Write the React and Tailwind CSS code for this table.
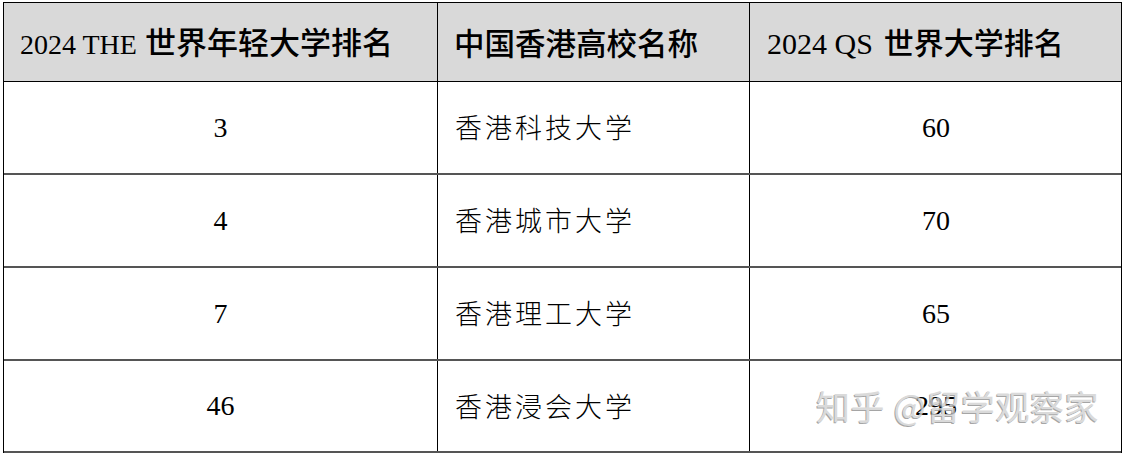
import React from "react";

const rows = [
  ["3", "香港科技大学", "60"],
  ["4", "香港城市大学", "70"],
  ["7", "香港理工大学", "65"],
  ["46", "香港浸会大学", "295"],
];

const serifCls = "font-['Liberation_Serif','Noto_Sans_CJK_SC',serif]";
const sansCls = "font-['Noto_Sans_CJK_SC',sans-serif]";

export default function App() {
  return (
    <div className="relative w-[1125px] h-[454px] bg-white overflow-hidden text-black">
      <div className="ml-[3px] mt-[2px] w-[1119px] border-t border-l border-r border-black">
        <div className="grid grid-cols-[434px_312px_372px] h-[79px] bg-[#d9d9d9] border-b border-black">
          <div className="flex items-center border-r border-black pl-[16px] whitespace-nowrap">
            <span className="flex items-baseline">
              <span className={`text-[28px] leading-none ${serifCls}`}>2024 THE</span>
              <span className={`text-[31px] leading-none font-medium ml-[8px] ${sansCls}`}>世界年轻大学排名</span>
            </span>
          </div>
          <div className="flex items-center border-r border-black pl-[16px]">
            <span className={`text-[30.5px] leading-none font-medium ${sansCls}`}>中国香港高校名称</span>
          </div>
          <div className="flex items-center pl-[17px] whitespace-nowrap">
            <span className="flex items-baseline">
              <span className={`text-[30px] leading-none ${serifCls}`}>2024 QS</span>
              <span className={`text-[30px] leading-none font-medium ml-[11px] ${sansCls}`}>世界大学排名</span>
            </span>
          </div>
        </div>
        {rows.map((r, i) => (
          <div
            key={i}
            className={`grid grid-cols-[434px_312px_372px] border-b-2 border-[#555555] ${i === 3 ? "h-[92px]" : "h-[93px]"}`}
          >
            <div className={`flex items-center justify-center border-r border-black text-[28px] ${serifCls}`}>
              {r[0]}
            </div>
            <div className="flex items-center border-r border-black pl-[17px]">
              <span className={`text-[27px] font-light tracking-[3px] ${sansCls}`}>{r[1]}</span>
            </div>
            <div className={`flex items-center justify-center text-[28px] ${serifCls}`}>
              {r[2]}
            </div>
          </div>
        ))}
      </div>
      <div
        className={`absolute left-[816px] top-[389px] text-[34px] leading-none tracking-[0.6px] text-[#d2d2d2] opacity-80 whitespace-nowrap [text-shadow:-1px_1px_0_#8f8f8f] ${sansCls}`}
      >
        知乎 @留学观察家
      </div>
    </div>
  );
}
